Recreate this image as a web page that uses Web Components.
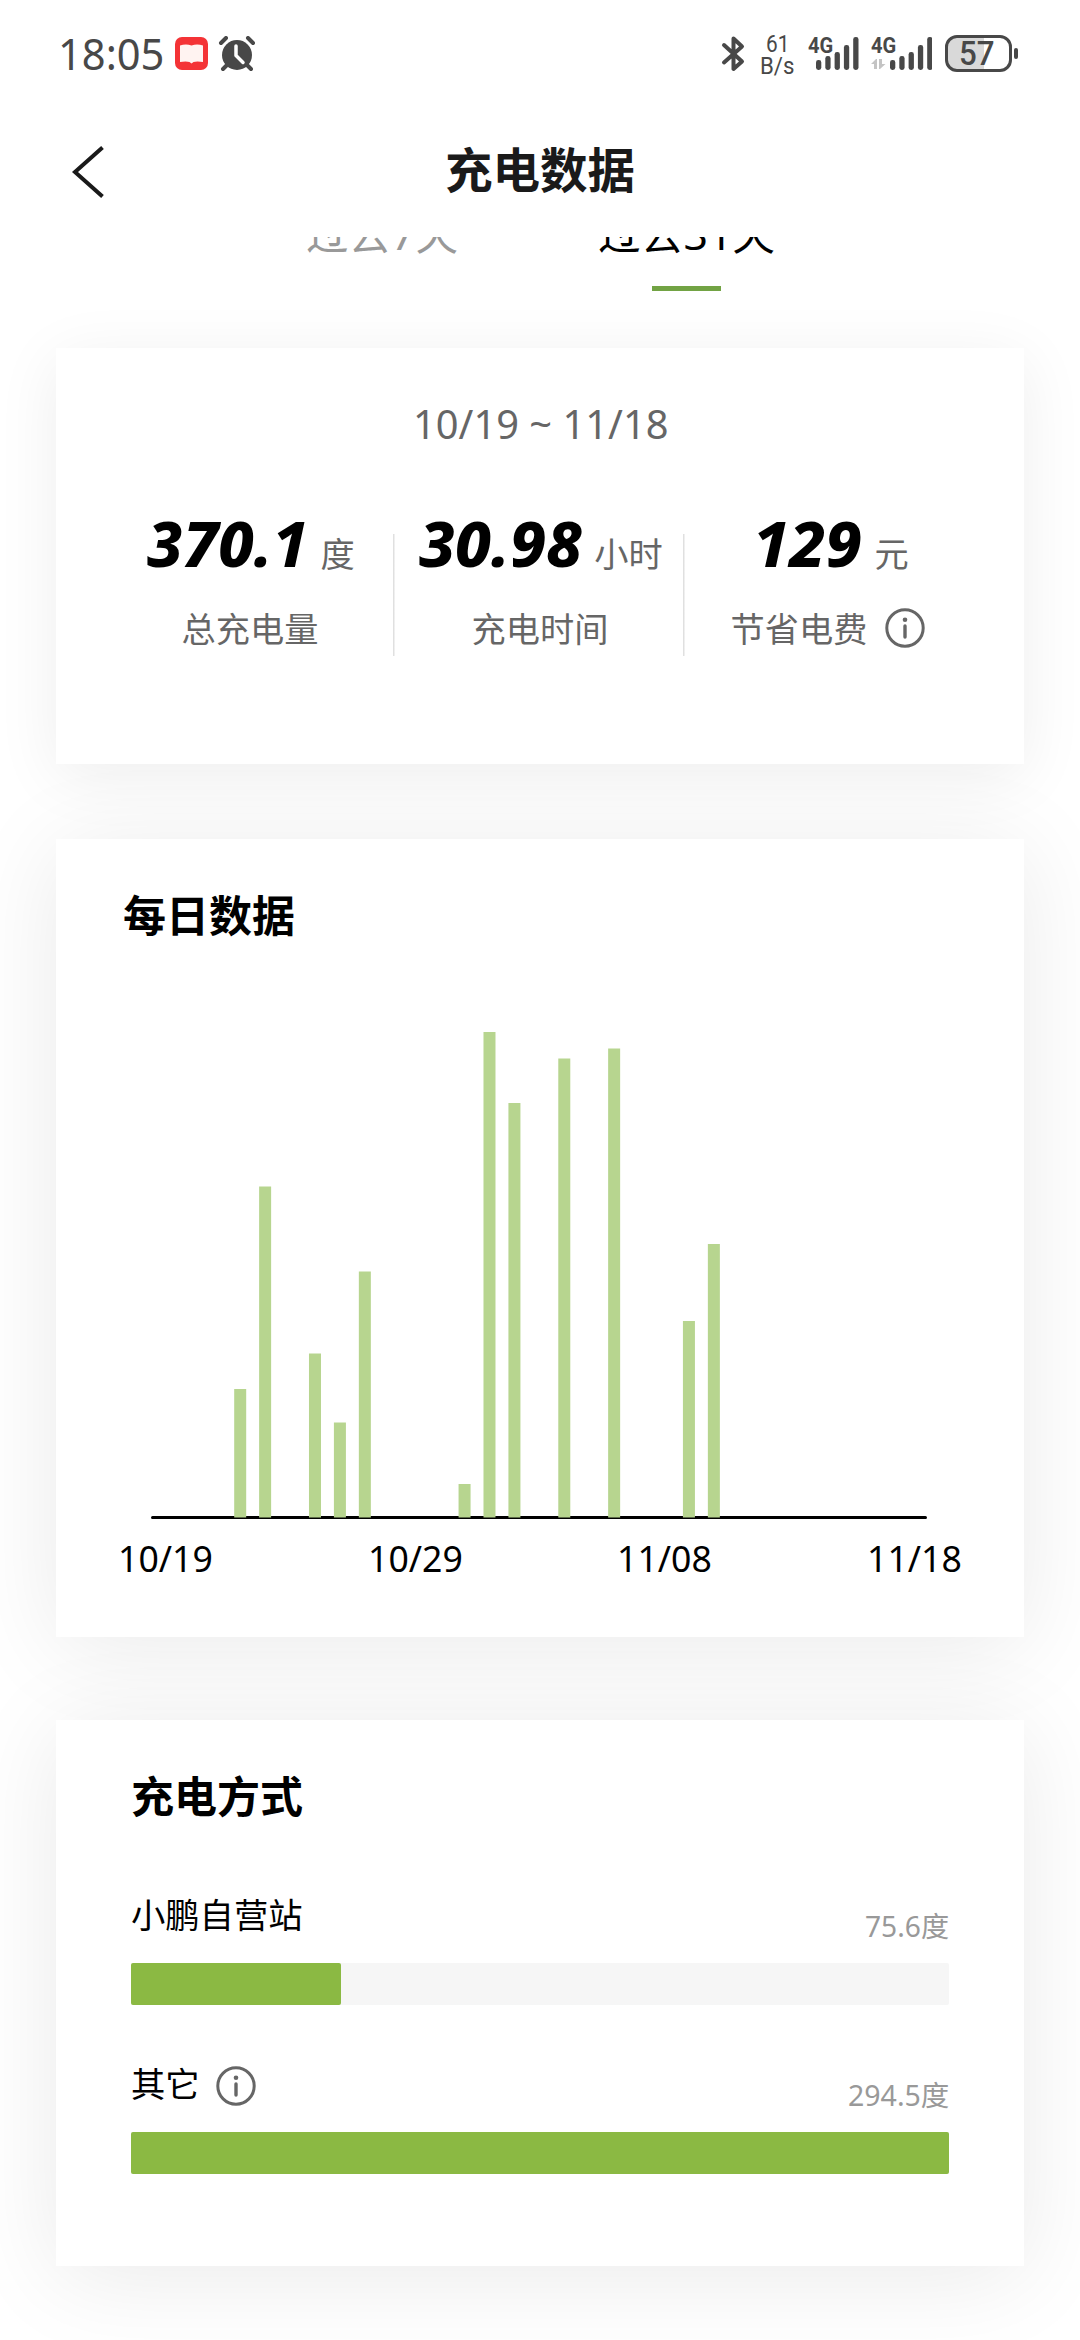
<!DOCTYPE html>
<html lang="zh-CN">
<head>
<meta charset="utf-8">
<title>充电数据</title>
<style>
  body {
    margin: 0;
    width: 1080px;
    height: 2340px;
    overflow: hidden;
    background: #fff;
    font-family: "Noto Sans", "Noto Sans CJK SC", sans-serif;
  }
</style>
</head>
<body>
<charging-page></charging-page>

<script>
// Sets the markup and styles of an element in an open shadow root
function render(el, css, html) {
  const tmpl = document.createElement('template');
  tmpl.innerHTML = `<style>${css}</style>${html}`;
  el.attachShadow({ mode: 'open' }).appendChild(tmpl.content.cloneNode(true));
}

// One line of text, condensed or widened to the given advance width
class FitText extends HTMLElement {
  connectedCallback() {
    render(this, `
      :host { display: inline-block; white-space: nowrap; }
      span { display: inline-block; transform-origin: 0 50%; }
    `, `<span><slot></slot></span>`);
    const width = Number(this.getAttribute('width'));
    const span = this.shadowRoot.querySelector('span');
    this.style.width = `${width}px`;
    span.style.transform = `scaleX(${width / span.offsetWidth})`;
  }
}

class SignalBars extends HTMLElement {
  constructor() {
    super();
    let bars = [10, 14, 18, 25, 33].map((h, i) =>
      `<rect x="${i * 9.3}" y="${34 - h}" width="5.3" height="${h}" rx="2.4"/>`).join('');
    render(this, `
      :host { display: flex; justify-content: flex-end; position: relative; width: 50.500px; height: 34px; color: #484848; }
      :host([data]) { width: 61.500px; }
      svg { display: block; flex: none; }
      fit-text { position: absolute; left: 0; top: -1px; font: 700 22.500px/20px Roboto, sans-serif; }
      .data { display: none; position: absolute; left: 0; bottom: 0; }
      :host([data]) .data { display: block; }
    `, `
      <fit-text width="25">4G</fit-text>
      <svg class="data" width="15" height="11" viewBox="0 0 15 11" fill="#c4c4c4">
        <path d="M0 5L5 0h1v10H3V5zM8 0h3v5h3.500L9 10H8z"/>
      </svg>
      <svg width="42.500" height="34" viewBox="0 0 42.500 34" fill="currentColor">${bars}</svg>`);
  }
}

class StatusBar extends HTMLElement {
  constructor() {
    super();
    render(this, `
      :host { display: flex; box-sizing: border-box; height: 108px; padding: 36px 68px 38px 58px; color: #484848; }
      svg { display: block; }
      .time { font-size: 44px; line-height: 34px; }
      .book { margin: 1px 0 0 11px; }
      .alarm { margin: 0 0 0 10px; }
      .bt { margin-left: auto; }
      .speed { display: flex; flex-direction: column; align-items: center; width: 34px; margin: -3px 14px 0 15px; font: 23.500px/22px Roboto, sans-serif; }
      signal-bars + signal-bars { margin-left: 12px; }
      .battery { position: relative; box-sizing: border-box; width: 67px; height: 37px; margin: -1px 0 0 13px; border: 3px solid #484848; border-radius: 12px; background: linear-gradient(90deg, #d9d9d9 36px, #fff 36px); }
      .battery::after { content: ""; position: absolute; left: 66px; top: 10px; width: 4px; height: 11px; border-radius: 2px; background: #484848; }
      .battery fit-text { margin-left: 11px; font: 500 33px/31px Roboto, sans-serif; }
    `, `
      <fit-text class="time" width="106">18:05</fit-text>
      <svg class="book" width="33" height="33" viewBox="0 0 33 33">
        <rect width="33" height="33" rx="7" fill="#f43336"/>
        <path d="M5 8.500q6-2 11.500 0q5.500-2 11.500 0v16.500q-6-1-9.500 0l-2 1.500l-2-1.500q-3.500-1-9.500 0z" fill="#fff3f1"/>
      </svg>
      <svg class="alarm" width="38" height="36" viewBox="0 0 38 36">
        <circle cx="19" cy="19" r="15" fill="#484848"/>
        <path d="M3 7l5-5M35 7l-5-5M5 33l5-5M33 33l-5-5" stroke="#484848" stroke-width="4" stroke-linecap="round"/>
        <path d="M18 10v9.500l7 7" fill="none" stroke="#fff" stroke-width="3.500" stroke-linecap="round" stroke-linejoin="round"/>
      </svg>
      <svg class="bt" width="24" height="36" viewBox="0 0 24 36" fill="none" stroke="#484848" stroke-width="4" stroke-linecap="round" stroke-linejoin="round">
        <path d="M3 9l18 16.500l-8.500 7.500V2.500L21 10.500L3 26.500"/>
      </svg>
      <div class="speed"><fit-text width="23">61</fit-text><fit-text width="34">B/s</fit-text></div>
      <signal-bars></signal-bars>
      <signal-bars data></signal-bars>
      <div class="battery"><fit-text width="36">57</fit-text></div>`);
  }
}

class PageHeader extends HTMLElement {
  constructor() {
    super();
    render(this, `
      :host { display: grid; grid-template-columns: 1fr auto 1fr; align-items: center; height: 129px; padding: 0 68px; color: #1a1a1a; }
      h1 { margin: 0 0 10px; font: 700 47.500px/60px "Noto Sans CJK SC", sans-serif; }
      svg { display: block; }
    `, `
      <svg width="40" height="54" viewBox="0 0 40 54" fill="none" stroke="currentColor" stroke-width="4">
        <path d="M34.500 1.500L7 26L34.500 50.500"/>
      </svg>
      <h1><slot></slot></h1>`);
  }
}

// Range tabs, scrolled half under the header
class RangeTabs extends HTMLElement {
  constructor() {
    super();
    render(this, `
      :host { display: flex; align-items: flex-end; justify-content: center; gap: 125px; overflow: hidden; height: 54px; padding-right: 12px; font-size: 42px; color: #000; }
      .tab { display: flex; flex-direction: column; align-items: center; width: 180px; line-height: 60px; }
      .tab::after { content: ""; width: 69px; height: 5px; margin-top: 22px; }
      .off { color: #999; }
      .on::after { background: #72a344; }
      fit-text { flex: none; }
    `, `
      <div class="tab off"><fit-text width="152">过去7天</fit-text></div>
      <div class="tab on"><fit-text width="177">过去31天</fit-text></div>`);
  }
}

class InfoIcon extends HTMLElement {
  constructor() {
    super();
    render(this, `
      :host { display: block; width: 40px; height: 40px; color: #666; }
      svg { display: block; }
    `, `
      <svg width="40" height="40" viewBox="0 0 40 40" fill="none" stroke="currentColor" stroke-width="3">
        <circle cx="20" cy="20" r="18.200"/>
        <path d="M20 18v11" stroke-width="3.400" stroke-linecap="round"/>
        <circle cx="20" cy="11.700" r="2.300" fill="currentColor" stroke="none"/>
      </svg>`);
  }
}

class PageCard extends HTMLElement {
  constructor() {
    super();
    render(this, `
      :host { display: block; box-sizing: border-box; background: #fff; }
      h2 { margin: 0 0 0 var(--heading-inset, 0); font: 700 43px/60px "Noto Sans CJK SC", sans-serif; color: #000; }
      h2:empty { display: none; }
    `, `<h2>${this.getAttribute('heading') || ''}</h2><slot></slot>`);
  }
}

class StatItem extends HTMLElement {
  constructor() {
    super();
    render(this, `
      :host { display: flex; flex-direction: column; align-items: center; height: 154px; color: #666; font-size: 34.200px; }
      .value { display: flex; align-items: baseline; gap: 12px; height: 103px; margin-left: 2px; line-height: 83px; }
      .value fit-text { color: #000; font-size: 62px; font-weight: 800; font-style: italic; }
      .label { display: flex; align-items: center; gap: 18px; height: 44px; font-family: "Noto Sans CJK SC", sans-serif; }
      ::slotted(info-icon) { margin: 2px 4px 0 0; }
    `, `
      <div class="value"><fit-text width="${this.getAttribute('size')}">${this.getAttribute('value')}</fit-text><span>${this.getAttribute('unit')}</span></div>
      <div class="label">${this.getAttribute('label')}<slot></slot></div>`);
  }
}

class DailyChart extends HTMLElement {
  constructor() {
    super();
    // [day index from 10/19, bar height]
    let days = [[3, 128], [4, 330.5], [6, 163.5], [7, 94.5], [8, 245.5], [12, 33], [13, 485], [14, 414], [16, 458.5], [18, 468.5], [21, 196], [22, 273]];
    let bars = days.map(([day, h]) =>
      `<rect x="${(8.4 + day * 24.93).toFixed(2)}" y="${485 - h}" width="12" height="${h + 0.5}"/>`).join('');
    let labels = ['10/19', '10/29', '11/08', '11/18'].map((text) => `<fit-text width="95">${text}</fit-text>`).join('');
    render(this, `
      :host { display: block; }
      svg { display: block; margin-left: 95px; }
      .labels { display: flex; justify-content: space-between; margin: 14px 62px 0; font-size: 36px; line-height: 50px; color: #000; }
    `, `
      <svg width="776" height="488" viewBox="0 0 776 488">
        <rect y="484" width="776" height="3" rx="1.500" fill="#000"/>
        <g fill="#b7d58f">${bars}</g>
      </svg>
      <div class="labels">${labels}</div>`);
  }
}

class MethodRow extends HTMLElement {
  constructor() {
    super();
    render(this, `
      :host { display: block; }
      .head { display: flex; justify-content: space-between; height: 75px; }
      .name { display: flex; align-items: flex-start; gap: 17px; font: 34.300px/50px "Noto Sans CJK SC", sans-serif; color: #000; }
      ::slotted(info-icon) { margin: 9px 0 0 -1px; }
      .amount { align-self: flex-end; margin-bottom: 17px; font-size: 28.500px; line-height: 40px; color: #999; }
      .track { height: 42px; border-radius: 2px; background: #f6f6f6; }
      .fill { height: 100%; width: ${this.getAttribute('percent')}%; border-radius: 2px; background: #8bb943; }
    `, `
      <div class="head">
        <div class="name">${this.getAttribute('name')}<slot></slot></div>
        <fit-text class="amount" width="${this.getAttribute('size')}">${this.getAttribute('amount')}</fit-text>
      </div>
      <div class="track"><div class="fill"></div></div>`);
  }
}

class ChargingPage extends HTMLElement {
  constructor() {
    super();
    render(this, `
      :host { display: block; }
      page-card { margin: 0 56px; box-shadow: 0 10px 90px rgba(0, 0, 0, .085); }
      .summary { height: 416px; margin-top: 57px; padding: 46px 47px 0; box-shadow: 0 12px 60px rgba(0, 0, 0, .07); }
      .date { display: block; margin: 0 auto; font-size: 40px; line-height: 60px; color: #666; }
      .stats { display: grid; grid-template-columns: repeat(3, 290px); margin-top: 48px; }
      stat-item { padding-left: 4px; }
      stat-item + stat-item { background: linear-gradient(#e0e0e0, #e0e0e0) no-repeat 0 32px / 1.500px 123px; }
      .daily { --heading-inset: 67px; height: 798px; margin-top: 75px; padding-top: 44px; }
      .methods { height: 546px; margin-top: 83px; padding: 44px 75px 0; }
      daily-chart { margin-top: 89px; }
      method-row { margin-top: 64px; }
      method-row + method-row { margin-top: 52px; }
    `, `
      <status-bar></status-bar>
      <page-header>充电数据</page-header>
      <range-tabs></range-tabs>
      <page-card class="summary">
        <fit-text class="date" width="255">10/19 ~ 11/18</fit-text>
        <div class="stats">
          <stat-item value="370.1" size="161" unit="度" label="总充电量"></stat-item>
          <stat-item value="30.98" size="163" unit="小时" label="充电时间"></stat-item>
          <stat-item value="129" size="109" unit="元" label="节省电费"><info-icon></info-icon></stat-item>
        </div>
      </page-card>
      <page-card class="daily" heading="每日数据">
        <daily-chart></daily-chart>
      </page-card>
      <page-card class="methods" heading="充电方式">
        <method-row name="小鹏自营站" amount="75.6度" size="84" percent="25.67"></method-row>
        <method-row name="其它" amount="294.5度" size="101" percent="100"><info-icon></info-icon></method-row>
      </page-card>`);
  }
}

customElements.define('fit-text', FitText);
customElements.define('signal-bars', SignalBars);
customElements.define('status-bar', StatusBar);
customElements.define('page-header', PageHeader);
customElements.define('range-tabs', RangeTabs);
customElements.define('info-icon', InfoIcon);
customElements.define('page-card', PageCard);
customElements.define('stat-item', StatItem);
customElements.define('daily-chart', DailyChart);
customElements.define('method-row', MethodRow);
customElements.define('charging-page', ChargingPage);
</script>
</body>
</html>
